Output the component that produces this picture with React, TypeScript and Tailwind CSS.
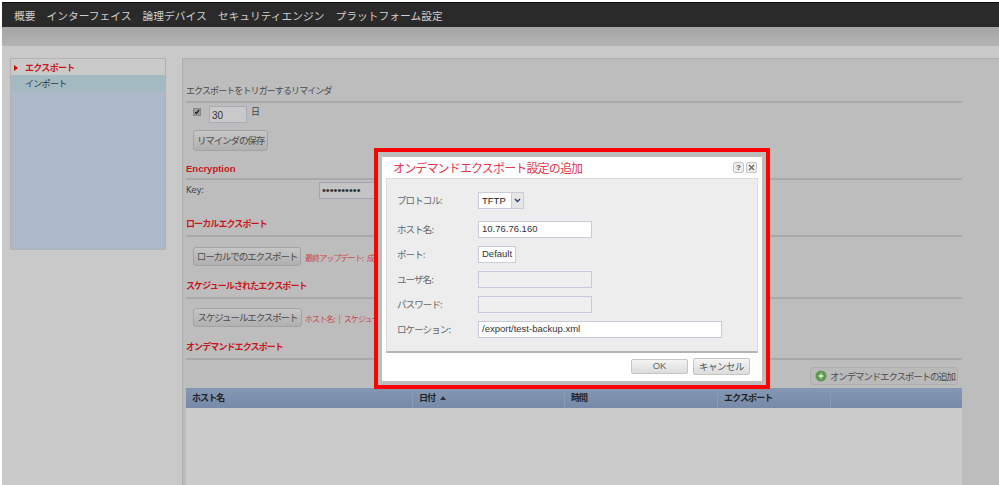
import React from 'react';

const font = 'font-["Noto_Sans_CJK_JP","Liberation_Sans",sans-serif]';

const SectionTitle = ({ children, className = '' }: { children: React.ReactNode; className?: string }) => (
  <div className={`border-b-2 border-[#a9a9a9] text-[9px] tracking-[-0.9px] leading-[14px] font-bold text-[#c8161d] pb-[4px] ${className}`}>{children}</div>
);

const GrayButton = ({ children, className = '' }: { children: React.ReactNode; className?: string }) => (
  <div className={`flex items-center justify-center rounded-[3px] border border-[#a3a3a3] bg-gradient-to-b from-[#c6c6c6] to-[#b0b0b0] text-[9.5px] tracking-[-1.1px] text-[#4c4c4c] whitespace-nowrap ${className}`}>{children}</div>
);

const Field = ({ label, value, width, disabled }: { label: string; value?: string; width: string; disabled?: boolean }) => (
  <div className="flex items-center h-[17px]">
    <div className="w-[81px] text-[9.5px] tracking-[-0.9px] text-[#666]">{label}</div>
    <div className={`h-[17px] border border-[#c8ccd8] pl-[3px] flex items-center text-[9.5px] text-[#333] font-["Liberation_Sans",sans-serif] ${width} ${disabled ? 'bg-[#efefef]' : 'bg-white'}`}>{value}</div>
  </div>
);

export default function App() {
  const nav = ['概要', 'インターフェイス', '論理デバイス', 'セキュリティエンジン', 'プラットフォーム設定'];
  return (
    <div className={`relative w-[999px] h-[485px] overflow-hidden bg-white pl-[2px] pt-[2px] ${font}`}>
      <div className="h-[25px] bg-[#2a2a2a] border-t border-[#111] flex items-center gap-[11px] pl-[12px] pt-[2px] text-[10.75px] text-[#cfcfcf]">
        {nav.map(n => <span key={n}>{n}</span>)}
      </div>
      <div className="h-[19px] bg-gradient-to-b from-[#a4a4a4] to-[#b4b4b4]" />
      <div className="h-[439px] bg-[#c9c9c9] flex items-start pt-[12px]">
        <div className="ml-[8px] w-[156px] h-[192px] bg-[#adb8ca] border border-[#b3b3b3]">
          <div className="h-[16px] pt-[1px] bg-[#cacaca] flex items-center text-[9px] tracking-[-0.7px] font-bold text-[#c8161d]">
            <span className="ml-[3px] w-0 h-0 border-y-[3px] border-y-transparent border-l-[4px] border-l-[#c00]" />
            <span className="ml-[7px]">エクスポート</span>
          </div>
          <div className="h-[17px] bg-[#a3bac3] flex items-center pl-[14px] text-[9px] tracking-[-0.7px] text-[#333]">インポート</div>
        </div>
        <div className="ml-[16px] w-[817px] h-[427px] bg-[#bdbdbd] border-l border-t border-[#aeaeae] pl-[3px] pt-[25px]">
          <div className="w-[776px]">
            <div className="border-b-2 border-[#a9a9a9] text-[9px] tracking-[-0.9px] leading-[14px] text-[#4a4a4a] pb-[3px]">エクスポートをトリガーするリマインダ</div>
            <div className="flex items-start mt-[3px] ml-[7px]">
              <div className="mt-[2px] w-[8px] h-[8px] bg-[#9a9a9a] border border-[#888] flex items-center justify-center">
                <svg width="8" height="8" viewBox="0 0 8 8"><path d="M1.5 4 L3.2 6 L6.8 1.2" stroke="#111" strokeWidth="1.5" fill="none" /></svg>
              </div>
              <div className="ml-[8px] w-[38px] h-[17px] bg-[#c9c9c9] border border-[#a7acb8] pl-[2px] text-[10px] leading-[17px] text-[#333] font-['Liberation_Sans',sans-serif]">30</div>
              <div className="ml-[4px] text-[9px] leading-[12px] text-[#444]">日</div>
            </div>
            <GrayButton className="ml-[7px] mt-[7px] w-[75px] h-[21px]">リマインダの保存</GrayButton>
            <SectionTitle className="mt-[11px] !pb-[2px] !tracking-normal !text-[9.5px] font-['Liberation_Sans',sans-serif]">Encryption</SectionTitle>
            <div className="flex items-center h-[17px] mt-[2px]">
              <div className="w-[133px] text-[8.7px] text-[#444] font-['DejaVu_Sans',sans-serif]">Key:</div>
              <div className="w-[60px] h-[17px] bg-[#c4c4c4] border border-[#9ea6b8] pl-[2px] text-[11px] leading-[15px] text-[#333] font-['Liberation_Sans',sans-serif] whitespace-nowrap overflow-hidden">••••••••••</div>
            </div>
            <SectionTitle className="mt-[18px]">ローカルエクスポート</SectionTitle>
            <div className="flex items-center mt-[10px] ml-[7px]">
              <GrayButton className="w-[108px] h-[19px]">ローカルでのエクスポート</GrayButton>
              <span className="ml-[4px] mt-[3px] text-[8px] tracking-[-0.9px] [word-spacing:3px] text-[#c9474c] whitespace-nowrap">最終アップデート: 成功</span>
            </div>
            <SectionTitle className="mt-[13px]">スケジュールされたエクスポート</SectionTitle>
            <div className="flex items-center mt-[9px] ml-[7px]">
              <GrayButton className="w-[109px] h-[19px]">スケジュールエクスポート</GrayButton>
              <span className="ml-[3px] mt-[3px] text-[8px] tracking-[-0.9px] [word-spacing:3px] text-[#c9474c] whitespace-nowrap">ホスト名: | スケジュール</span>
            </div>
            <SectionTitle className="mt-[13px]">オンデマンドエクスポート</SectionTitle>
            <div className="flex justify-end mt-[7px]">
              <div className="mr-[4px] h-[18px] w-[148px] flex items-center rounded-[3px] border border-[#adadad] bg-[#bababa] text-[9.5px] tracking-[-1.15px] text-[#4c4c4c] whitespace-nowrap pl-[4px] gap-[3px]">
                <svg width="12" height="12" viewBox="0 0 12 12" className="shrink-0">
                  <circle cx="6" cy="6" r="5.5" fill="#5e9a52" />
                  <path d="M6 3.5v5M3.5 6h5" stroke="#dfe8d8" strokeWidth="1.4" />
                </svg>
                オンデマンドエクスポートの追加
              </div>
            </div>
            <div className="h-[20px] mt-[3px] bg-gradient-to-b from-[#8497b3] to-[#778aa8] grid grid-cols-[226px_152px_153px_113px_1fr] text-[9px] tracking-[-0.9px] font-bold text-[#222] leading-[20px]">
              <div className="pl-[6px]">ホスト名</div>
              <div className="pl-[6px] border-l border-[#8a9bb6] flex items-center gap-[5px]">
                日付
                <span className="w-0 h-0 border-x-[3px] border-x-transparent border-b-[4px] border-b-[#333]" />
              </div>
              <div className="pl-[6px] border-l border-[#8a9bb6]">時間</div>
              <div className="pl-[6px] border-l border-[#8a9bb6]">エクスポート</div>
              <div className="border-l border-[#8a9bb6]" />
            </div>
            <div className="h-[100px] bg-[#cbcbcb]" />
          </div>
        </div>
      </div>

      {/* red highlight with the dialog inside */}
      <div className="absolute left-[374px] top-[148px] w-[396px] h-[241px] border-[4px] border-[#fe0000] bg-[#bdbdbd] p-[4px] pt-[5px]">
        <div className="w-full h-full bg-white flex flex-col">
          <div className="h-[21px] shrink-0 flex items-center justify-between pl-[11px] pr-[5px]">
            <span className="text-[12px] tracking-[-0.85px] text-[#e8384f] whitespace-nowrap">オンデマンドエクスポート設定の追加</span>
            <div className="flex gap-[2px]">
              <div className="w-[11px] h-[11px] rounded-[2px] border border-[#c4c4c4] bg-[#ececec] flex items-center justify-center text-[8px] font-bold text-[#555] font-['Liberation_Sans',sans-serif]">?</div>
              <div className="w-[11px] h-[11px] rounded-[2px] border border-[#c4c4c4] bg-[#ececec] flex items-center justify-center">
                <svg width="7" height="7" viewBox="0 0 7 7"><path d="M1 1l5 5M6 1l-5 5" stroke="#666" strokeWidth="1.2" /></svg>
              </div>
            </div>
          </div>
          <div className="mx-[4px] h-[175px] shrink-0 bg-[#ededed] border border-[#dcdcdc] border-b-2 border-b-[#b5b5b5] pl-[10px] pt-[13px]">
            <div className="flex items-center h-[17px]">
              <div className="w-[81px] text-[9.5px] tracking-[-0.9px] text-[#666]">プロトコル:</div>
              <div className="h-[17px] w-[46px] border border-[#c8ccd8] bg-white flex font-['Liberation_Sans',sans-serif] text-[9.5px] text-[#222]">
                <span className="flex-1 pl-[3px] leading-[15px]">TFTP</span>
                <span className="w-[12px] bg-[#e6e6e6] border-l border-[#c8ccd8] flex items-center justify-center">
                  <svg width="7" height="5" viewBox="0 0 7 5"><path d="M1 1l2.5 2.5L6 1" stroke="#24407a" strokeWidth="1.4" fill="none" /></svg>
                </span>
              </div>
            </div>
            <div className="mt-[12px]"><Field label="ホスト名:" value="10.76.76.160" width="w-[114px]" /></div>
            <div className="mt-[8px]"><Field label="ポート:" value="Default" width="w-[38px]" /></div>
            <div className="mt-[8px]"><Field label="ユーザ名:" width="w-[114px]" disabled /></div>
            <div className="mt-[8px]"><Field label="パスワード:" width="w-[114px]" disabled /></div>
            <div className="mt-[8px]"><Field label="ロケーション:" value="/export/test-backup.xml" width="w-[244px]" /></div>
          </div>
          <div className="flex justify-end items-start gap-[5px] pr-[12px] pt-[5px]">
            <div className="w-[57px] h-[15px] mt-[1px] rounded-[2px] border border-[#c6c6c6] bg-gradient-to-b from-[#f4f4f4] to-[#dcdcdc] flex items-center justify-center text-[9.5px] text-[#666] font-['Liberation_Sans',sans-serif]">OK</div>
            <div className="w-[57px] h-[17px] rounded-[2px] border border-[#c6c6c6] bg-gradient-to-b from-[#f4f4f4] to-[#dcdcdc] flex items-center justify-center text-[9.5px] tracking-[-0.5px] text-[#555]">キャンセル</div>
          </div>
        </div>
      </div>
    </div>
  );
}
